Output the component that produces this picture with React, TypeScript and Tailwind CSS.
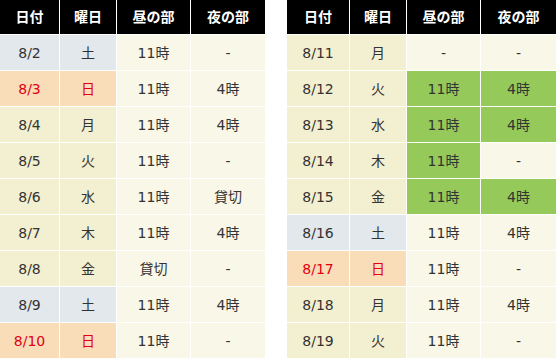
import React from "react";

type Kind = "sat" | "sun" | "wd";
type Row = { d: string; w: string; k: Kind; a: string; b: string; ga?: boolean; gb?: boolean };

const left: Row[] = [
  { d: "8/2", w: "土", k: "sat", a: "11時", b: "-" },
  { d: "8/3", w: "日", k: "sun", a: "11時", b: "4時" },
  { d: "8/4", w: "月", k: "wd", a: "11時", b: "4時" },
  { d: "8/5", w: "火", k: "wd", a: "11時", b: "-" },
  { d: "8/6", w: "水", k: "wd", a: "11時", b: "貸切" },
  { d: "8/7", w: "木", k: "wd", a: "11時", b: "4時" },
  { d: "8/8", w: "金", k: "wd", a: "貸切", b: "-" },
  { d: "8/9", w: "土", k: "sat", a: "11時", b: "4時" },
  { d: "8/10", w: "日", k: "sun", a: "11時", b: "-" },
];

const right: Row[] = [
  { d: "8/11", w: "月", k: "wd", a: "-", b: "-" },
  { d: "8/12", w: "火", k: "wd", a: "11時", b: "4時", ga: true, gb: true },
  { d: "8/13", w: "水", k: "wd", a: "11時", b: "4時", ga: true, gb: true },
  { d: "8/14", w: "木", k: "wd", a: "11時", b: "-", ga: true },
  { d: "8/15", w: "金", k: "wd", a: "11時", b: "4時", ga: true, gb: true },
  { d: "8/16", w: "土", k: "sat", a: "11時", b: "4時" },
  { d: "8/17", w: "日", k: "sun", a: "11時", b: "-" },
  { d: "8/18", w: "月", k: "wd", a: "11時", b: "4時" },
  { d: "8/19", w: "火", k: "wd", a: "11時", b: "-" },
];

const dayBg: Record<Kind, string> = {
  sat: "bg-[#e2e8ec]",
  sun: "bg-[#f9ddb9]",
  wd: "bg-[#f3efd1]",
};

function Table({ rows, cols }: { rows: Row[]; cols: string }) {
  const head = ["日付", "曜日", "昼の部", "夜の部"];
  return (
    <div className={`grid ${cols} grid-rows-[34px_repeat(9,35px)] gap-px bg-white`}>
      {head.map((h) => (
        <div key={h} className="flex items-center justify-center bg-black text-white font-bold">
          {h}
        </div>
      ))}
      {rows.map((r) => {
        const tc = r.k === "sun" ? "text-[#e00010]" : "text-[#333333]";
        return (
          <React.Fragment key={r.d}>
            <div className={`flex items-center justify-center ${dayBg[r.k]} ${tc}`}>{r.d}</div>
            <div className={`flex items-center justify-center ${dayBg[r.k]} ${tc}`}>{r.w}</div>
            <div className={`flex items-center justify-center text-[#333333] ${r.ga ? "bg-[#95ca5a]" : "bg-[#f9f7e7]"}`}>{r.a}</div>
            <div className={`flex items-center justify-center text-[#333333] ${r.gb ? "bg-[#95ca5a]" : "bg-[#f9f7e7]"}`}>{r.b}</div>
          </React.Fragment>
        );
      })}
    </div>
  );
}

export default function App() {
  return (
    <div
      className="flex w-[556px] h-[362px] bg-white gap-[22px] text-[14px] leading-none"
      style={{ fontFamily: '"DejaVu Sans", "Noto Sans CJK JP", sans-serif' }}
    >
      <Table rows={left} cols="grid-cols-[59px_56px_73px_74px]" />
      <Table rows={right} cols="grid-cols-[62px_56px_73px_75px]" />
    </div>
  );
}
